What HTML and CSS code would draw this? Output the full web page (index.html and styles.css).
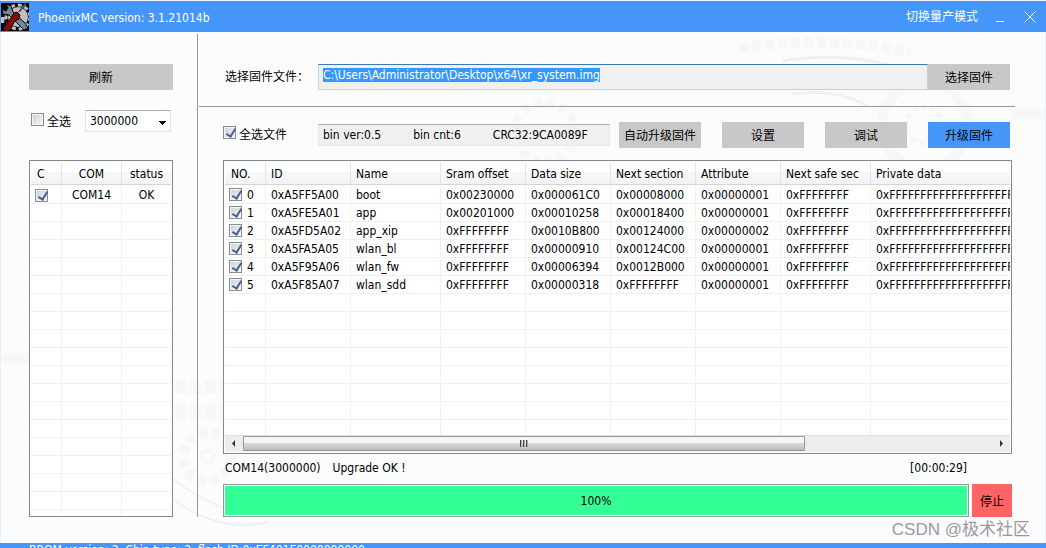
FILE: index.html
```html
<!DOCTYPE html>
<html lang="zh-CN">
<head>
<meta charset="utf-8">
<title>PhoenixMC</title>
<link rel="stylesheet" href="styles.css">
</head>
<body>
<header class="titlebar">
  <svg class="logo" viewBox="0 0 28 28" aria-hidden="true">
    <rect width="28" height="28" fill="#050505"/>
    <circle cx="17" cy="14" r="12" fill="none" stroke="#c0c0c0" stroke-width="3" stroke-dasharray="4 3"/>
    <circle cx="17" cy="14" r="10" fill="#c0c0c0"/>
    <path d="M1 6l4 2 2-3-2-4 5 2 2 6 12 11 3 5-4 2-4-4L8 12 2 11z" fill="#76879a" stroke="#080808"/>
    <path d="M18 9l4-5 3-3" fill="none" stroke="#4b5a6c" stroke-width="2"/>
    <path d="M0 14h4l-1 6H0z" fill="#c0c0c0"/>
    <path d="M13 10l3-1 3 3-1 4-4 2-6 10H3l-1-3 8-10z" fill="#870c08" stroke="#180303"/>
  </svg>
  <h1 class="title">PhoenixMC version: 3.1.21014b</h1>
  <button class="mode">切换量产模式</button>
  <button class="winbtn minimize" aria-label="最小化"><svg viewBox="0 0 12 12"><path d="M2 10.500h8" /></svg></button>
  <button class="winbtn" aria-label="关闭"><svg viewBox="0 0 12 12"><path d="M.5.5l11 11M11.5.5l-11 11"/></svg></button>
</header>

<main class="workspace">
  <svg class="backdrop" viewBox="0 0 1046 511" preserveAspectRatio="none" aria-hidden="true">
    <g fill="none" stroke="#f7f7f7">
      <path d="M740 16q90-14 172 5" stroke-width="10" stroke-dasharray="9 4"/>
      <path d="M783 29q52-9 108 4M792 62q45-6 76 12" stroke="#f1f1f1" stroke-width="3"/>
      <circle cx="925" cy="93" r="43" stroke-width="10"/>
      <circle cx="925" cy="93" r="18" stroke-width="5" stroke-dasharray="6 3"/>
      <circle cx="545" cy="100" r="30" stroke-width="9" stroke-dasharray="8 5"/>
      <circle cx="207" cy="425" r="24" stroke-width="11" stroke-dasharray="8 5"/>
      <circle cx="207" cy="425" r="6" stroke-width="4"/>
      <path d="M173 447q55 45 120 34M173 468q48 34 95 22" stroke="#f1f1f1" stroke-width="2"/>
      <path d="M174 355h50M174 380h50" stroke-width="14" stroke-dasharray="11 4"/>
      <path d="M1012 82h34M0 326h29" stroke-width="10"/>
    </g>
  </svg>

  <section class="ports">
    <button class="btn refresh">刷新</button>
    <div class="portbar">
      <label class="check"><input type="checkbox"><span>全选</span></label>
      <select class="baud" aria-label="波特率"><option>3000000</option></select>
    </div>
    <div class="list">
      <div class="view">
        <table class="grid portgrid">
          <colgroup><col class="w-c"><col class="w-com"><col></colgroup>
          <thead><tr><th>C</th><th>COM</th><th>status</th></tr></thead>
          <tbody>
            <tr><td><input type="checkbox" checked aria-label="COM14"></td><td>COM14</td><td>OK</td></tr>
            <tr class="filler"><td></td><td></td><td></td></tr>
          </tbody>
        </table>
      </div>
    </div>
  </section>

  <section class="firmware">
    <div class="filebar">
      <label class="filelabel" for="path">选择固件文件：</label>
      <input class="path" id="path" type="text" value="C:\Users\Administrator\Desktop\x64\xr_system.img">
      <button class="btn">选择固件</button>
    </div>
    <div class="actions">
      <label class="check allfiles"><input type="checkbox" checked><span>全选文件</span></label>
      <div class="info"><span>bin ver:0.5</span><span>bin cnt:6</span><span>CRC32:9CA0089F</span></div>
      <div class="buttons">
        <button class="btn">自动升级固件</button>
        <button class="btn">设置</button>
        <button class="btn">调试</button>
        <button class="btn primary">升级固件</button>
      </div>
    </div>
    <div class="list sections">
      <div class="view">
        <table class="grid sectiongrid">
          <colgroup><col class="w-no"><col class="w-85"><col class="w-90"><col class="w-85"><col class="w-85"><col class="w-85"><col class="w-85"><col class="w-90"><col></colgroup>
          <thead><tr><th>NO.</th><th>ID</th><th>Name</th><th>Sram offset</th><th>Data size</th><th>Next section</th><th>Attribute</th><th>Next safe sec</th><th>Private data</th></tr></thead>
          <tbody>
            <tr><td><label class="num"><input type="checkbox" checked>0</label></td><td>0xA5FF5A00</td><td>boot</td><td>0x00230000</td><td>0x000061C0</td><td>0x00008000</td><td>0x00000001</td><td>0xFFFFFFFF</td><td>0xFFFFFFFFFFFFFFFFFFFF</td></tr>
            <tr><td><label class="num"><input type="checkbox" checked>1</label></td><td>0xA5FE5A01</td><td>app</td><td>0x00201000</td><td>0x00010258</td><td>0x00018400</td><td>0x00000001</td><td>0xFFFFFFFF</td><td>0xFFFFFFFFFFFFFFFFFFFF</td></tr>
            <tr><td><label class="num"><input type="checkbox" checked>2</label></td><td>0xA5FD5A02</td><td>app_xip</td><td>0xFFFFFFFF</td><td>0x0010B800</td><td>0x00124000</td><td>0x00000002</td><td>0xFFFFFFFF</td><td>0xFFFFFFFFFFFFFFFFFFFF</td></tr>
            <tr><td><label class="num"><input type="checkbox" checked>3</label></td><td>0xA5FA5A05</td><td>wlan_bl</td><td>0xFFFFFFFF</td><td>0x00000910</td><td>0x00124C00</td><td>0x00000001</td><td>0xFFFFFFFF</td><td>0xFFFFFFFFFFFFFFFFFFFF</td></tr>
            <tr><td><label class="num"><input type="checkbox" checked>4</label></td><td>0xA5F95A06</td><td>wlan_fw</td><td>0xFFFFFFFF</td><td>0x00006394</td><td>0x0012B000</td><td>0x00000001</td><td>0xFFFFFFFF</td><td>0xFFFFFFFFFFFFFFFFFFFF</td></tr>
            <tr><td><label class="num"><input type="checkbox" checked>5</label></td><td>0xA5F85A07</td><td>wlan_sdd</td><td>0xFFFFFFFF</td><td>0x00000318</td><td>0xFFFFFFFF</td><td>0x00000001</td><td>0xFFFFFFFF</td><td>0xFFFFFFFFFFFFFFFFFFFF</td></tr>
            <tr class="filler"><td></td><td></td><td></td><td></td><td></td><td></td><td></td><td></td><td></td></tr>
          </tbody>
        </table>
      </div>
      <div class="scrollbar">
        <svg class="arrow" viewBox="0 0 18 16"><path d="M10 4v7L7 7.500z"/></svg>
        <div class="track"><div class="thumb"><i></i><i></i><i></i></div></div>
        <svg class="arrow" viewBox="0 0 18 16"><path d="M8 4v7l3-3.500z"/></svg>
      </div>
    </div>
    <div class="status"><span>COM14(3000000)</span><span>Upgrade OK !</span><time class="elapsed">[00:00:29]</time></div>
    <div class="progressbar">
      <div class="progress" role="progressbar" aria-valuenow="100"><div class="fill">100%</div></div>
      <button class="btn stop">停止</button>
    </div>
  </section>
  <div class="watermark">CSDN @极术社区</div>
</main>
<footer class="footer">BROM version: 2&nbsp; Chip type: 2&nbsp; flash ID:0xEF401E0000000000</footer>
<script src="main.js"></script>
</body>
</html>
```

FILE: styles.css
```css
* { box-sizing: border-box; }

body {
  margin: 0;
  height: 100vh;
  display: flex;
  flex-direction: column;
  overflow: hidden;
  border-top: 1px solid #eef0f2;
  background: #fcfcfc;
  color: #000;
  font: 12px/18px "DejaVu Sans Condensed", "Noto Sans", "Noto Sans CJK SC", sans-serif;
}

button, input, select { font: inherit; color: inherit; margin: 0; }
button { border: 0; padding: 0; background: none; }

.titlebar {
  flex: none;
  display: flex;
  align-items: center;
  height: 31px;
  padding: 0 10px 0 1px;
  background: #4696fa;
  color: #fff;
}
.logo { width: 28px; height: 28px; }
.title { flex: 1; margin: 0 0 0 9px; padding-top: 2px; font-size: 12px; font-weight: 400; }
.mode { margin-right: 16px; }
.winbtn { width: 12px; height: 12px; display: flex; margin-left: 18px; }
.winbtn.minimize { margin-left: 0; }
.winbtn svg { width: 12px; height: 12px; fill: none; stroke: #fff; }

.workspace {
  position: relative;
  flex: 1;
  min-height: 0;
  display: flex;
  padding: 2px 0 26px;
  border: solid #e4f0fd;
  border-width: 0 1px;
}
.backdrop { position: absolute; inset: 0; width: 100%; height: 100%; }
.ports, .firmware { position: relative; display: flex; flex-direction: column; padding-top: 30px; }
.ports { flex: none; width: 197px; padding-left: 28px; padding-right: 24px; border-right: 1px solid #96969b; }
.firmware { flex: 1; min-width: 0; padding-left: 25px; padding-right: 33px; }

.btn { flex: none; width: 82px; height: 26px; padding-top: 2px; background: #c8c8c8; }
.primary { background: #4696fa; }
.refresh { width: 100%; }

input[type="checkbox"] {
  appearance: none;
  flex: none;
  width: 13px;
  height: 13px;
  border: 1px solid #8a8c8f;
  background: linear-gradient(135deg, #cdd1d6, #f6f7f8) center / 9px 9px no-repeat #f4f4f4;
}
input[type="checkbox"]:checked::before {
  content: "";
  display: block;
  width: 4px;
  height: 8px;
  margin: 0 0 0 4px;
  border: solid #4a5f97;
  border-width: 0 2px 2px 0;
  transform: rotate(32deg);
}
.check { display: flex; align-items: flex-start; gap: 3px; }

.portbar { display: flex; align-items: center; justify-content: space-between; height: 22px; margin: 20px 2px 28px; }
.baud {
  appearance: none;
  width: 86px;
  height: 22px;
  padding: 0 4px;
  border: 1px solid #dfe2e8;
  border-top-color: #abadb3;
  border-radius: 1px;
  background: linear-gradient(#000, #000) right 4px top 10px / 7px 1px no-repeat,
              linear-gradient(#000, #000) right 5px top 11px / 5px 1px no-repeat,
              linear-gradient(#000, #000) right 6px top 12px / 3px 1px no-repeat,
              linear-gradient(#000, #000) right 7px top 13px / 1px 1px no-repeat, #fff;
}
.portbar .check { height: 16px; }

.list { flex: 1; min-height: 0; display: flex; flex-direction: column; padding: 1px; border: 1px solid #828790; background: #fff; }
.view { flex: 1; min-height: 0; overflow: hidden; }
.grid { width: 100%; table-layout: fixed; border-collapse: separate; border-spacing: 0; }
.grid th {
  height: 23px;
  padding: 2px 0 0;
  font-weight: 400;
  border-right: 1px solid #e3e5e8;
  border-bottom: 1px solid #d5d5d5;
  background: linear-gradient(#fff 45%, #f7f8fa 45%, #f2f3f5);
}
.grid td {
  height: 18px;
  padding: 2px 0 0;
  line-height: 15px;
  white-space: nowrap;
  overflow: hidden;
  border-right: 1px solid #f0f0f0;
  border-bottom: 1px solid #f0f0f0;
}
.grid tbody tr:first-child td { height: 19px; padding-top: 3px; }
.grid tr.filler td { height: 360px; background: repeating-linear-gradient(transparent 0 17px, #f0f0f0 17px 18px); }
.portgrid th, .portgrid td { text-align: center; }
.portgrid th:first-child, .portgrid td:first-child { text-align: left; padding-left: 6px; }
.portgrid tbody td:first-child { padding-left: 4px; }
.grid input { display: block; }
.portgrid th:last-child, .portgrid td:last-child { border-right: 0; }
.w-c { width: 31px; }
.w-com { width: 60px; }

.sectiongrid { width: 1100px; }
.sectiongrid th, .sectiongrid td { text-align: left; padding-left: 5px; }
.sectiongrid th:first-child { padding-left: 6px; }
.sectiongrid td:first-child { padding-left: 4px; }
.w-no { width: 41px; }
.w-85 { width: 85px; }
.w-90 { width: 90px; }
.num { display: flex; gap: 5px; }

.filebar { display: flex; align-items: center; padding-right: 2px; }
.filelabel { flex: none; width: 95px; padding-left: 2px; }
.path {
  flex: 1;
  min-width: 0;
  height: 26px;
  padding: 0 4px 5px;
  border: 1px solid #b7d4ea;
  border-top-color: #3d7bad;
  outline: 0;
  background: #f0f0f0;
}
.path::selection { background: #3399ff; color: #fff; }

.actions {
  display: flex;
  align-items: center;
  margin: 16px -3px 12px -24px;
  padding: 15px 5px 0 24px;
  border-top: 1px solid #96969b;
}
.allfiles { flex: none; width: 95px; height: 18px; }
.info {
  flex: 1;
  display: flex;
  gap: 32px;
  height: 22px;
  padding: 1px 4px 0;
  white-space: nowrap;
  border: 1px solid #e3e9ef;
  border-top-color: #abadb3;
  background: #f0f0f0;
}
.buttons { display: flex; gap: 21px; margin-left: 9px; }

.scrollbar { flex: none; display: flex; height: 17px; background: #ededed; border-top: 1px solid #e0e0e0; }
.arrow { flex: none; width: 18px; height: 16px; fill: #333; }
.track { flex: 1; }
.thumb {
  display: flex;
  align-items: center;
  justify-content: center;
  gap: 1px;
  width: 75%;
  height: 15px;
  border: 1px solid #96969b;
  border-radius: 1px;
  background: linear-gradient(#f5f5f5 45%, #dadada 50%, #bdbdc1);
}
.thumb i { width: 2px; height: 7px; border-left: 1px solid #444; background: #aaa; }

.status { display: flex; gap: 12px; height: 30px; padding: 5px 45px 0 2px; }
.elapsed { margin-left: auto; }
.progressbar { display: flex; gap: 3px; height: 33px; }
.progress { flex: 1; padding: 1px; border: 1px solid #96969b; background: #fff; }
.fill { display: flex; align-items: center; justify-content: center; height: 100%; background: #32ff96; }
.stop { width: 40px; height: 100%; background: #ff6464; }

.watermark {
  position: absolute;
  right: 15px;
  bottom: 1px;
  font: 17px/24px "Liberation Sans", "Noto Sans CJK SC", sans-serif;
  color: #9a9a9a;
}
.footer { flex: none; height: 5px; padding-left: 29px; line-height: 14px; overflow: hidden; background: #4696fa; color: #fff; }
```

FILE: main.js
```js
const path = document.getElementById("path");
path.focus();
path.select();
```
